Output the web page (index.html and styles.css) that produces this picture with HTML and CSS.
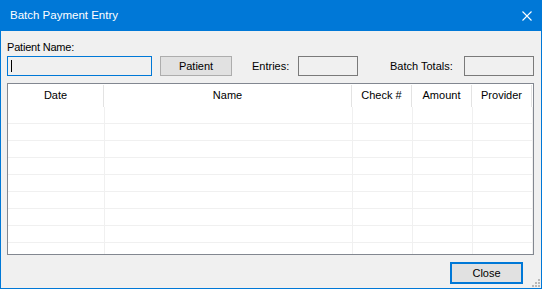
FILE: index.html
```html
<!DOCTYPE html>
<html lang="en">
<head>
    <meta charset="UTF-8">
    <title>Batch Payment Entry</title>
    <link rel="stylesheet" href="styles.css">
</head>
<body>
    <div class="window">
        <div class="titlebar">
            <span class="title">Batch Payment Entry</span>
            <svg class="close-x" width="10" height="10" viewBox="0 0 10 10">
                <path d="M0.5 0.5 L9.5 9.5 M9.5 0.5 L0.5 9.5" stroke="#fff" stroke-width="1.1" fill="none"/>
            </svg>
        </div>
        <div class="content">
            <div class="name-label">Patient Name:</div>
            <div class="form-row">
                <div class="textbox"><span class="caret"></span></div>
                <div class="btn patient-btn">Patient</div>
                <span class="field-label entries-label">Entries:</span>
                <div class="readout entries"></div>
                <span class="field-label totals-label">Batch Totals:</span>
                <div class="readout totals"></div>
            </div>
            <div class="grid">
                <div class="grid-head">
                    <div class="hcell">Date</div>
                    <div class="hcell">Name</div>
                    <div class="hcell">Check #</div>
                    <div class="hcell">Amount</div>
                    <div class="hcell">Provider</div>
                </div>
                <div class="grid-body">
                    <div class="row"><div></div><div></div><div></div><div></div><div></div></div>
                    <div class="row"><div></div><div></div><div></div><div></div><div></div></div>
                    <div class="row"><div></div><div></div><div></div><div></div><div></div></div>
                    <div class="row"><div></div><div></div><div></div><div></div><div></div></div>
                    <div class="row"><div></div><div></div><div></div><div></div><div></div></div>
                    <div class="row"><div></div><div></div><div></div><div></div><div></div></div>
                    <div class="row"><div></div><div></div><div></div><div></div><div></div></div>
                    <div class="row"><div></div><div></div><div></div><div></div><div></div></div>
                    <div class="row"><div></div><div></div><div></div><div></div><div></div></div>
                </div>
            </div>
            <div class="footer">
                <div class="btn close-btn">Close</div>
            </div>
        </div>
        <svg class="grip" width="10" height="10" viewBox="0 0 10 10">
            <rect x="7" y="1" width="2" height="2" fill="#b8b8b8"/>
            <rect x="4" y="4" width="2" height="2" fill="#b8b8b8"/>
            <rect x="7" y="4" width="2" height="2" fill="#b8b8b8"/>
            <rect x="1" y="7" width="2" height="2" fill="#b8b8b8"/>
            <rect x="4" y="7" width="2" height="2" fill="#b8b8b8"/>
            <rect x="7" y="7" width="2" height="2" fill="#b8b8b8"/>
        </svg>
    </div>
</body>
</html>
```

FILE: styles.css
```css
*{
    padding: 0;
    margin: 0;
    box-sizing: border-box;
}
body{
    font-family: "Liberation Sans", Arial, sans-serif;
    font-size: 11px;
    color: #000;
    background: #fff;
}
.window{
    width: 542px;
    height: 289px;
    border: 1px solid #0078d7;
    border-top: none;
    background: #f0f0f0;
    position: relative;
    display: flex;
    flex-direction: column;
}
.titlebar{
    height: 31px;
    background: #0078d7;
    display: flex;
    align-items: center;
    justify-content: space-between;
    padding: 0 9px 0 9px;
    color: #fff;
}
.title{
    font-size: 11.5px;
    margin-top: -1px;
}
.close-x{
    display: block;
}
.content{
    padding: 10px 0 0 6px;
    display: flex;
    flex-direction: column;
}
.name-label{
    height: 13px;
    line-height: 13px;
    margin-bottom: 2px;
    letter-spacing: -0.2px;
}
.form-row{
    display: flex;
    align-items: center;
    height: 20px;
}
.textbox{
    width: 145px;
    height: 20px;
    border: 1px solid #0078d7;
    background: #f0f0f0;
    padding: 3px 0 0 3px;
}
.caret{
    display: block;
    width: 1px;
    height: 12px;
    background: #000;
}
.btn{
    height: 20px;
    border: 1px solid #adadad;
    background: #e1e1e1;
    display: flex;
    align-items: center;
    justify-content: center;
}
.patient-btn{
    width: 72px;
    margin-left: 8px;
}
.field-label{
    line-height: 20px;
}
.entries-label{
    width: 46px;
    margin-left: 20px;
}
.totals-label{
    width: 74px;
    margin-left: 32px;
}
.readout{
    height: 20px;
    border: 1px solid #7a7a7a;
    background: #f0f0f0;
}
.entries{
    width: 60px;
}
.totals{
    width: 70px;
}
.grid{
    margin-top: 7px;
    width: 527px;
    height: 172px;
    border: 1px solid #828790;
    background: #fff;
    overflow: hidden;
}
.grid-head{
    display: grid;
    grid-template-columns: 96px 248px 60px 60px 60px;
    height: 23px;
    padding-top: 1px;
}
.hcell{
    border-right: 1px solid #e3e3e3;
    text-align: center;
    line-height: 20px;
}
.row{
    display: grid;
    grid-template-columns: 97px 248px 60px 60px 60px;
    height: 17px;
    border-bottom: 1px solid #f0f0f0;
    width: 525px;
}
.row div{
    border-right: 1px solid #f0f0f0;
}
.footer{
    display: flex;
    justify-content: flex-end;
    margin-top: 7px;
    padding-right: 18px;
}
.close-btn{
    width: 73px;
    height: 22px;
    border: 2px solid #0078d7;
}
.grip{
    position: absolute;
    right: 0;
    bottom: 0;
}
```
